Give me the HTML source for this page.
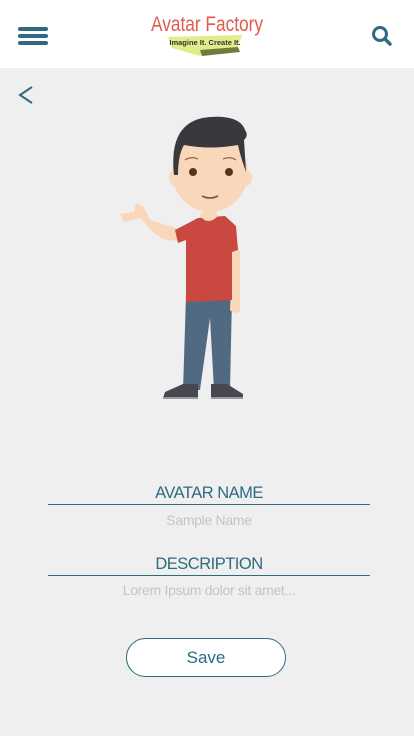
<!DOCTYPE html><html><head><meta charset="utf-8"><style>
body{margin:0;width:414px;height:736px;background:#efefef;font-family:"Liberation Sans",sans-serif;position:relative;overflow:hidden}
.hdr{position:absolute;left:0;top:0;width:414px;height:68px;background:#fff}
.lbl{position:absolute;left:48px;width:322px;text-align:center;color:#2e6b80;font-size:16.5px;letter-spacing:-0.5px;border-bottom:1.5px solid #2e6b80;padding-bottom:1px}
.ph{position:absolute;left:48px;width:322px;text-align:center;color:#c4c4c4;font-size:14px;letter-spacing:-0.3px}
</style></head><body>
<div class="hdr">
<svg width="414" height="68" style="position:absolute;left:0;top:0">
<g stroke="#2e6b80" stroke-width="4" stroke-linecap="round"><line x1="20" y1="29" x2="46" y2="29"/><line x1="20" y1="36" x2="46" y2="36"/><line x1="20" y1="43" x2="46" y2="43"/></g>
<circle cx="380" cy="34" r="6.5" fill="none" stroke="#2e6b80" stroke-width="3"/><line x1="385" y1="39" x2="390" y2="44" stroke="#2e6b80" stroke-width="3.5" stroke-linecap="round"/>
<polygon points="168,37 242,35 238,47 208,50 200,56 172,48" fill="#e4eb8a"/>
<polygon points="200,50 238,47 240,52 202,56" fill="#6f7d3a"/>
<text x="207" y="31" text-anchor="middle" font-size="21" fill="#e05a4e" textLength="112" lengthAdjust="spacingAndGlyphs">Avatar Factory</text>
<text x="205" y="45" text-anchor="middle" font-size="7.5" fill="#333" font-weight="bold">Imagine It. Create It.</text>
</svg></div>
<svg width="414" height="420" style="position:absolute;left:0;top:68px" viewBox="0 68 414 420">
<polyline points="32,87 20,95 32,103" fill="none" stroke="#2e6b80" stroke-width="2"/>
<path d="M186,296 L232,296 L230,390 L214,390 L210,318 L200,390 L183,390 Z" fill="#516a82"/>
<path d="M165,392 L183,384 L198,384 L198,398 L163,398 Z M211,384 L227,384 L243,394 L243,398 L211,398Z" fill="#474752"/>
<rect x="163" y="397" width="35" height="2" fill="#999"/><rect x="211" y="397" width="32" height="2" fill="#999"/>
<path d="M232,250 L240,250 L240,310 Q236,316 230,310 Z" fill="#f8d7bb"/>
<path d="M176,228 L182,240 Q160,244 146,224 L140,218 L124,222 L120,214 L134,212 L136,203 L143,206 L150,220 Z" fill="#f8d7bb"/>
<path d="M198,218 L225,216 L236,226 L238,250 L232,252 L232,300 L186,302 L186,240 L178,243 L175,230 Z" fill="#c94840"/>
<path d="M200,216 Q208,226 218,216 L216,212 L202,212 Z" fill="#f8d7bb"/>
<ellipse cx="175" cy="178" rx="6" ry="8" fill="#f8d7bb"/><ellipse cx="246" cy="178" rx="6" ry="8" fill="#f8d7bb"/>
<ellipse cx="210" cy="172" rx="38" ry="40" fill="#f8d7bb"/>
<path d="M174,175 Q168,120 210,117 Q240,115 245,130 Q249,135 244,140 L246,172 Q240,155 238,145 Q210,150 184,145 Q178,155 178,175 Z" fill="#3a383c"/>
<circle cx="193" cy="172" r="4" fill="#5a3418"/><circle cx="229" cy="172" r="4" fill="#5a3418"/>
<path d="M185,160 Q191,156 198,159 M223,159 Q230,156 236,160" stroke="#a06a4a" stroke-width="1.3" fill="none"/>
<path d="M202,196 Q210,200 218,196" stroke="#7a5040" stroke-width="1.6" fill="none"/>
</svg>
<div class="lbl" style="top:484px">AVATAR NAME</div>
<div class="ph" style="top:512px">Sample Name</div>
<div class="lbl" style="top:555px">DESCRIPTION</div>
<div class="ph" style="top:582px">Lorem Ipsum dolor sit amet...</div>
<div style="position:absolute;left:126px;top:638px;width:158px;height:37px;border:1.5px solid #2e6b80;border-radius:20px;background:#fff;color:#2e6b80;font-size:17px;text-align:center;line-height:37px">Save</div>
</body></html>
